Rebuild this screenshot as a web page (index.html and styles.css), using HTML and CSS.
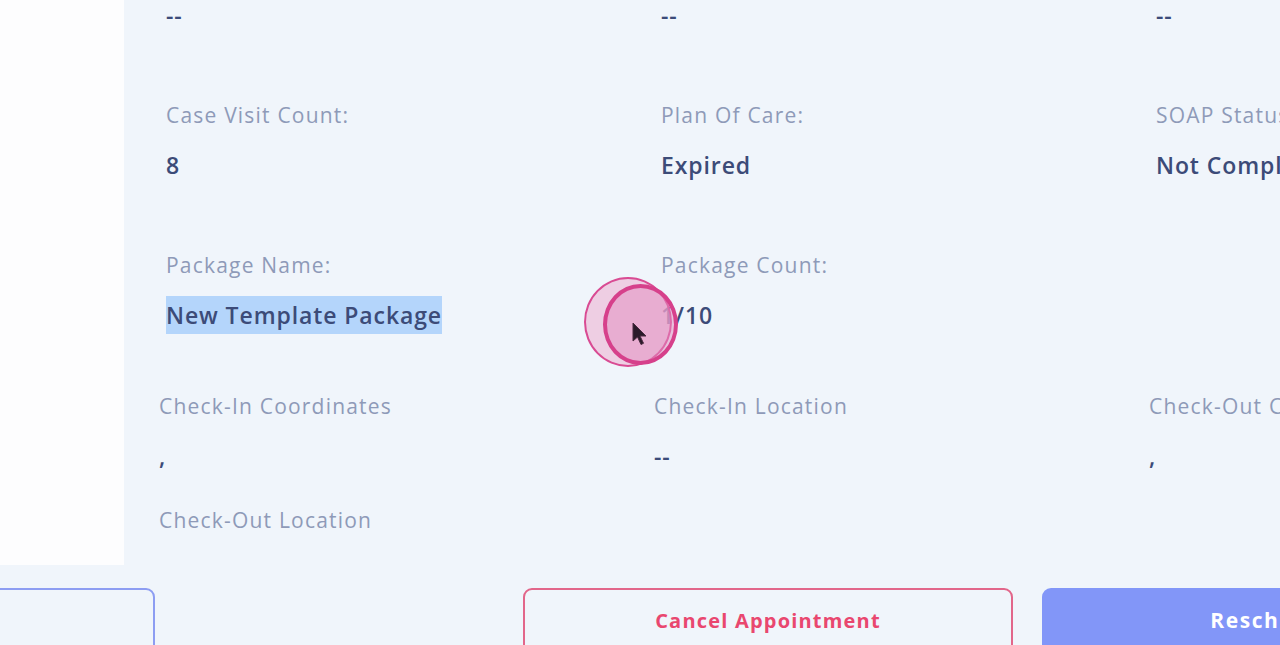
FILE: index.html
```html
<!DOCTYPE html>
<html>
<head>
<meta charset="utf-8">
<link rel="stylesheet" href="styles.css">
</head>
<body>
<div class="page">
  <aside class="sidebar"></aside>
  <main class="content">
    <div class="grid">
      <div class="field"><div class="value">--</div></div>
      <div class="field"><div class="value">--</div></div>
      <div class="field"><div class="value">--</div></div>
      <div class="field"><div class="label">Case Visit Count:</div><div class="value">8</div></div>
      <div class="field"><div class="label">Plan Of Care:</div><div class="value">Expired</div></div>
      <div class="field"><div class="label">SOAP Status:</div><div class="value">Not Completed</div></div>
      <div class="field"><div class="label">Package Name:</div><div class="value"><span class="selected">New Template Package</span></div></div>
      <div class="field"><div class="label">Package Count:</div><div class="value">1/10</div></div>
    </div>
    <div class="grid checks">
      <div class="field"><div class="label">Check-In Coordinates</div><div class="value">,</div></div>
      <div class="field"><div class="label">Check-In Location</div><div class="value">--</div></div>
      <div class="field"><div class="label">Check-Out Coordinates</div><div class="value">,</div></div>
      <div class="field"><div class="label">Check-Out Location</div></div>
    </div>
  </main>
</div>
<div class="actions">
  <button class="btn btn-outline">Back</button>
  <button class="btn btn-cancel">Cancel Appointment</button>
  <button class="btn btn-primary">Reschedule</button>
</div>
<div class="cursor">
  <div class="ring ring-outer"></div>
  <div class="ring ring-inner"></div>
  <svg class="arrow" width="16" height="24" viewBox="0 0 16 24"><path d="M1 1 L1 19 L5.5 15 L9 22.5 L11.5 21.3 L8 14 L14 14 Z" fill="#2a1a2a" stroke="#4a2a40" stroke-width="1"/></svg>
</div>
</body>
</html>
```
FILE: styles.css
```css
html, body {
  margin: 0;
  padding: 0;
}
body {
  width: 1280px;
  height: 645px;
  overflow: hidden;
  background: #f0f5fb;
  font-family: "Open Sans", "DejaVu Sans", sans-serif;
  position: relative;
}
.page {
  display: flex;
  height: 565px;
}
.sidebar {
  width: 124px;
  flex: none;
  background: #fdfdfe;
}
.content {
  flex: 1;
  padding-left: 42px;
  overflow: hidden;
}
.grid {
  display: grid;
  grid-template-columns: 495px 495px 495px;
  row-gap: 70px;
}
.field {
  display: flex;
  flex-direction: column;
  gap: 20px;
}
.label {
  font-size: 21px;
  line-height: 30px;
  font-weight: 500;
  letter-spacing: 1.2px;
  color: #8e9ab8;
  white-space: nowrap;
}
.value {
  font-size: 23px;
  line-height: 30px;
  font-weight: 600;
  letter-spacing: 0.9px;
  color: #3c4b78;
  white-space: nowrap;
}
.selected {
  background: #b4d5fb;
  padding: 3px 0;
}
.checks {
  margin-top: 61px;
  margin-left: -7px;
  row-gap: 34px;
}
.actions {
  display: flex;
  margin-top: 23px;
  margin-left: -335px;
}
.btn {
  flex: none;
  width: 490px;
  height: 80px;
  border-radius: 9px;
  font-family: "Open Sans", "DejaVu Sans", sans-serif;
  font-size: 20px;
  font-weight: 700;
  letter-spacing: 1.2px;
  padding: 0 0 16px;
  background: transparent;
}
.btn-outline {
  border: 2px solid #8d9df2;
  color: #7e93f6;
}
.btn-cancel {
  margin-left: 368px;
  border: 2px solid #e2668a;
  color: #e9476f;
}
.btn-primary {
  margin-left: 29px;
  border: none;
  background: #8296f8;
  color: #ffffff;
  font-size: 21px;
  letter-spacing: 1.6px;
  padding-right: 18px;
}
.cursor {
  position: absolute;
  left: 584px;
  top: 277px;
  width: 96px;
  height: 92px;
}
.ring {
  position: absolute;
  border-radius: 50%;
  box-sizing: border-box;
}
.ring-outer {
  left: 0;
  top: 0;
  width: 88px;
  height: 90px;
  background: rgba(236, 180, 212, 0.6);
  border: 2px solid #d94b93;
}
.ring-inner {
  left: 19px;
  top: 7px;
  width: 75px;
  height: 81px;
  background: rgba(226, 140, 192, 0.5);
  border: 4px solid #d6408b;
}
.arrow {
  position: absolute;
  left: 48px;
  top: 45px;
}
```
